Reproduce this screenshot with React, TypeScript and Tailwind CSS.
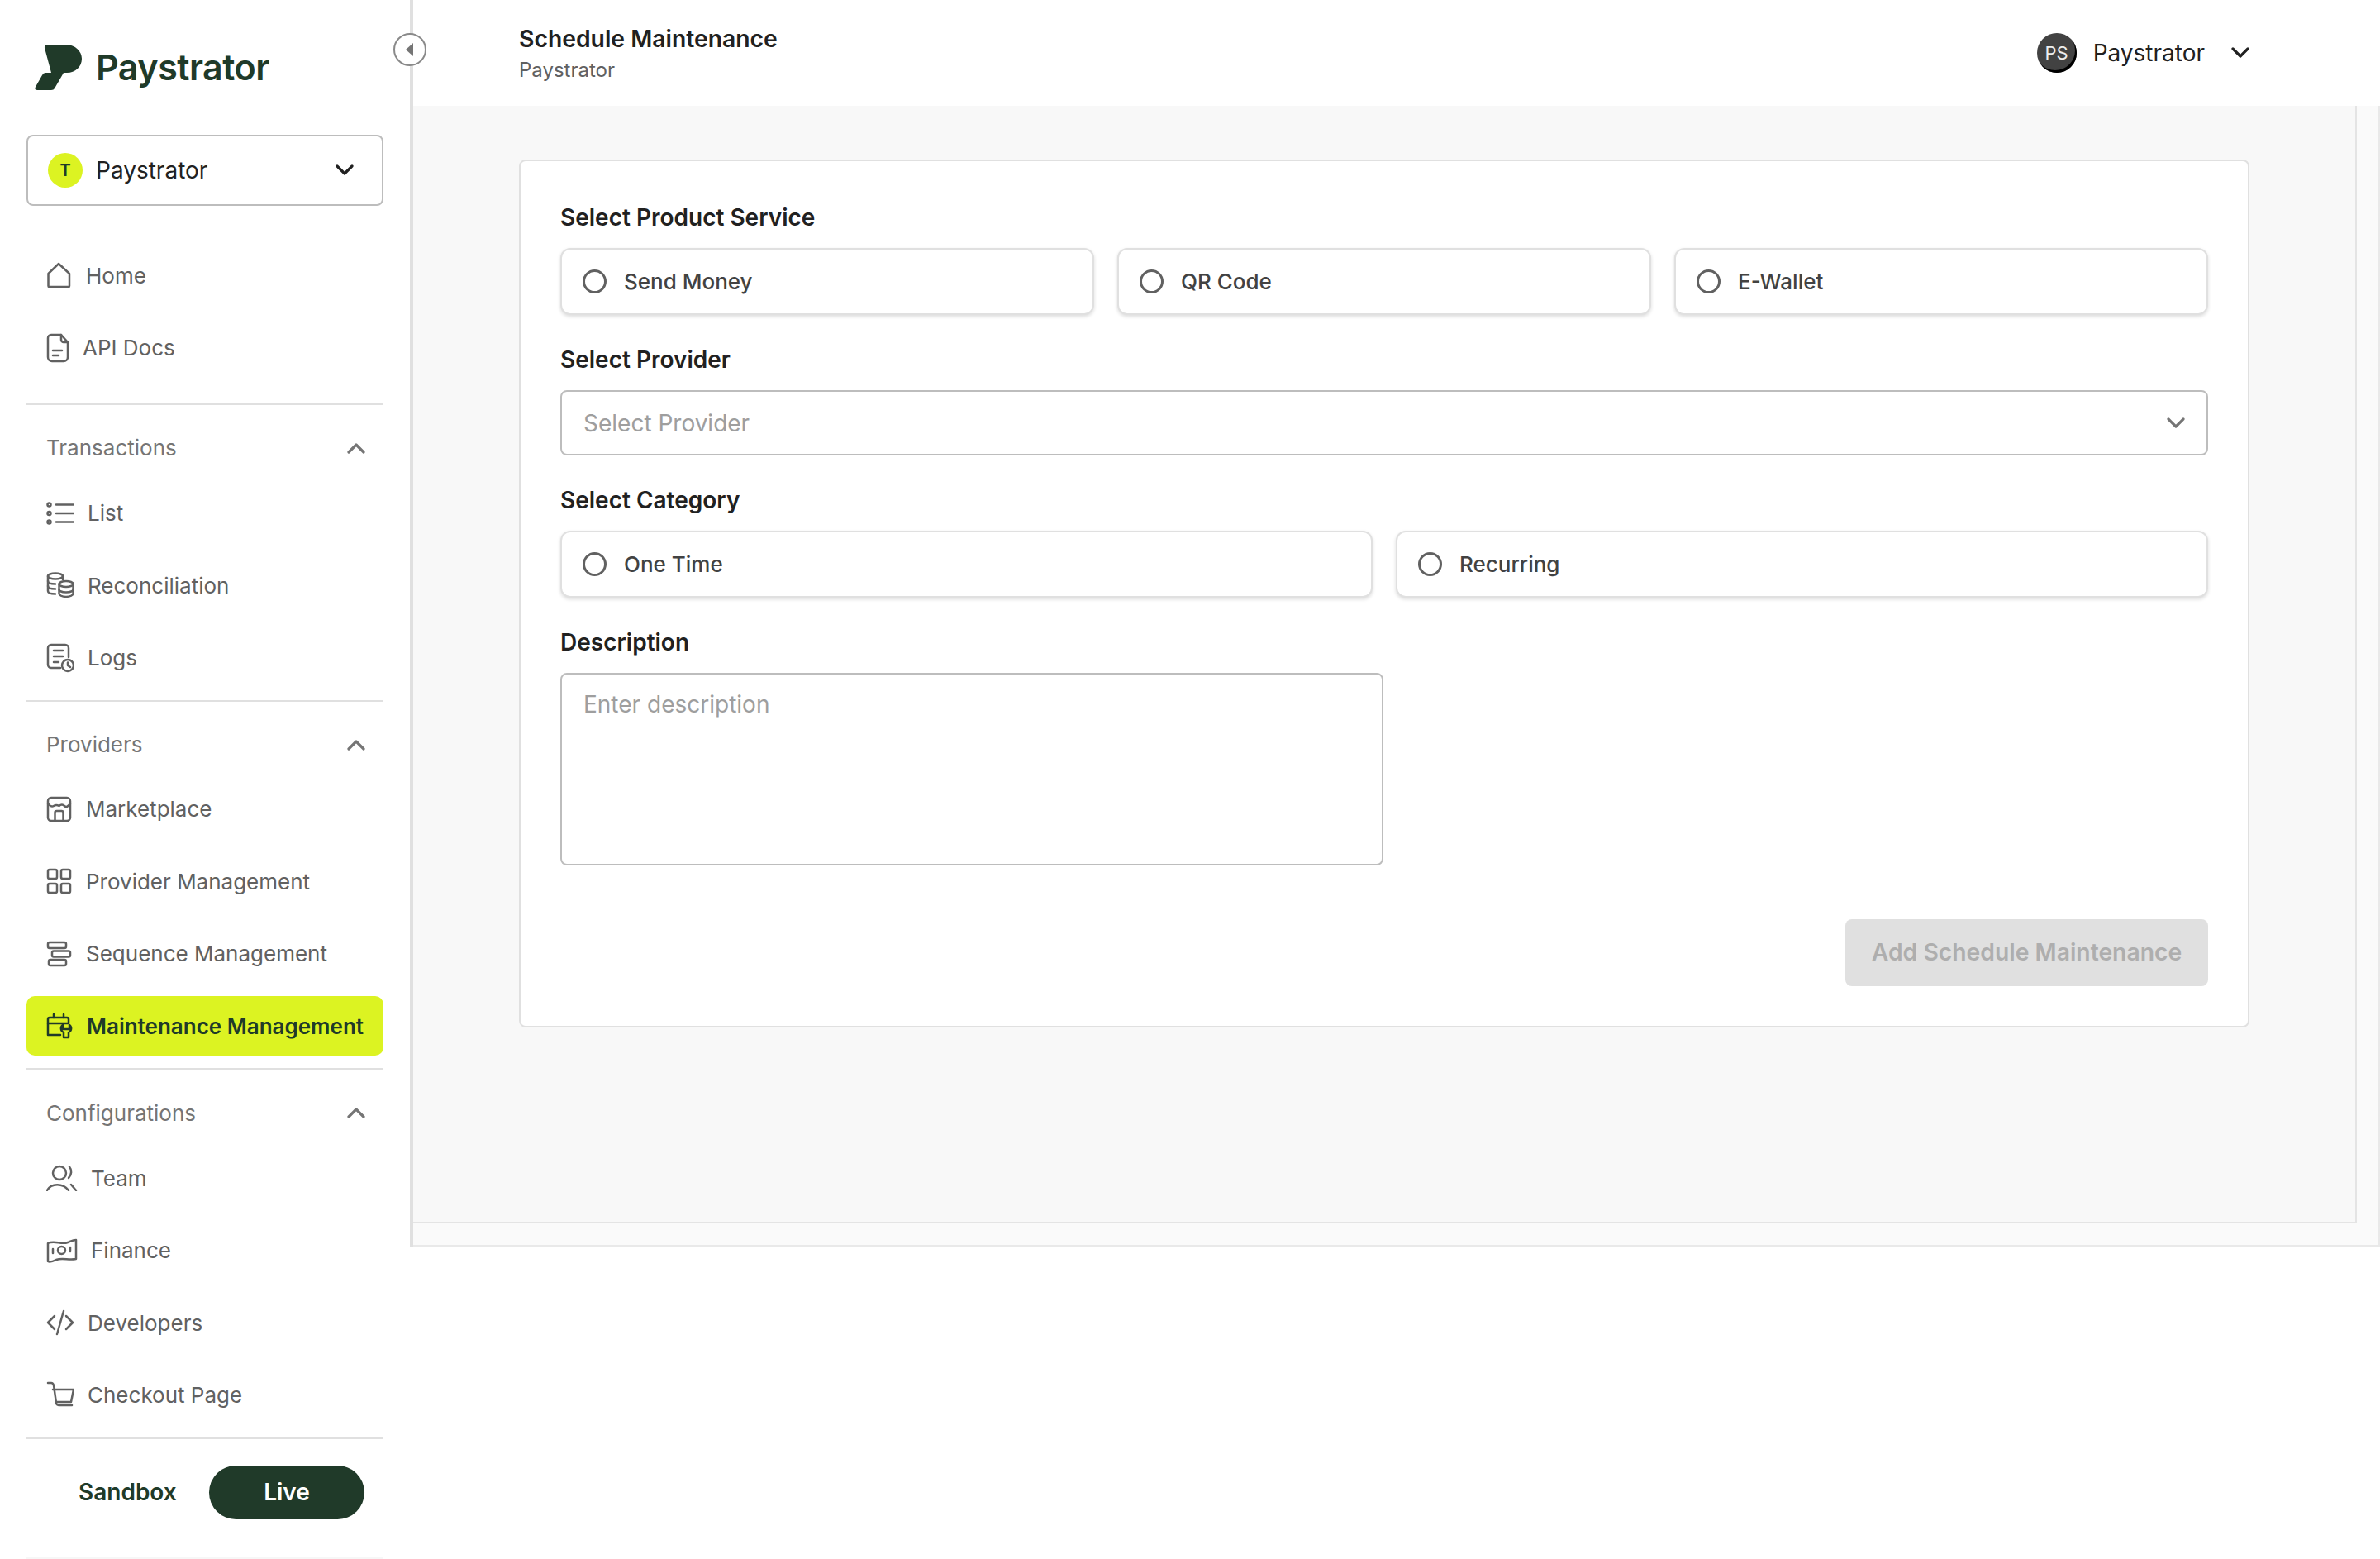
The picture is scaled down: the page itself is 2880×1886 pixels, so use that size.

import React from "react";

const S = { fill: "none", stroke: "currentColor", strokeWidth: 2.5, strokeLinecap: "round" as const, strokeLinejoin: "round" as const };

const Chevron = ({ up, className }: { up?: boolean; className: string }) => (
  <svg viewBox="0 0 22 14" width="22" height="14" className={className} fill="none" stroke="currentColor" strokeWidth="3.2" strokeLinecap="round" strokeLinejoin="round">
    <path d={up ? "M2 12 L11 3 L20 12" : "M2 2 L11 11 L20 2"} />
  </svg>
);

const HomeIcon = () => (
  <svg viewBox="0 0 32 32" width="32" height="32" {...S}><path d="M2.5 14 L15 2 L28 14 V29 a1 1 0 0 1-1 1 H3.5 a1 1 0 0 1-1-1 Z" /></svg>
);
const DocIcon = () => (
  <svg viewBox="0 0 28 36" width="28" height="36" {...S}>
    <path d="M6 2 H18 L26 11 V29 a5 5 0 0 1-5 5 H7 a5 5 0 0 1-5-5 V6 a4 4 0 0 1 4-4 Z" />
    <path d="M18 2 V8 a3 3 0 0 0 3 3 H26" /><path d="M8 21 H19" /><path d="M8 27 H15" />
  </svg>
);
const ListIcon = () => (
  <svg viewBox="0 0 34 28" width="34" height="28" {...S}>
    <circle cx="3.5" cy="3.5" r="2" /><circle cx="3.5" cy="14" r="2" /><circle cx="3.5" cy="24.5" r="2" />
    <path d="M12 3.5 H33" /><path d="M12 14 H33" /><path d="M12 24.5 H33" />
  </svg>
);
const CoinsIcon = () => (
  <svg viewBox="0 0 34 32" width="34" height="32" {...S}>
    <ellipse cx="11" cy="5" rx="9" ry="3.5" />
    <path d="M2 5 V23 c0 2 3 3.5 9 3.5" /><path d="M2 11 c0 2 3 3.5 9 3.5" /><path d="M2 17 c0 2 3 3.5 9 3.5" /><path d="M20 5 V9" />
    <ellipse cx="24" cy="14.5" rx="8.5" ry="3.5" />
    <path d="M15.5 14.5 V26 c0 2 3.5 4 8.5 4 s8.5-2 8.5-4 V14.5" /><path d="M15.5 21 c0 2 3.5 3.5 8.5 3.5 s8.5-1.5 8.5-3.5" />
  </svg>
);
const LogsIcon = () => (
  <svg viewBox="0 0 34 36" width="34" height="36" {...S}>
    <path d="M27 17 V6 a4 4 0 0 0-4-4 H6 a4 4 0 0 0-4 4 V26 a4 4 0 0 0 4 4 H17" />
    <path d="M9 9 H20" /><path d="M9 16 H20" /><path d="M9 23 H15" />
    <circle cx="26" cy="27" r="7" /><path d="M26 23.5 V27 L29 29" />
  </svg>
);
const MarketIcon = () => (
  <svg viewBox="0 0 32 32" width="32" height="32" {...S}>
    <rect x="2" y="2" width="27" height="28" rx="4" />
    <path d="M2 9 Q6 14 9 12 T15.5 12 Q19 9 22 12 T29 9" />
    <path d="M10.5 30 V20 a2 2 0 0 1 2-2 H18.5 a2 2 0 0 1 2 2 V30" />
  </svg>
);
const GridIcon = () => (
  <svg viewBox="0 0 32 32" width="32" height="32" {...S}>
    <rect x="2" y="2" width="11" height="11" rx="2" /><rect x="18" y="2" width="11" height="11" rx="2" />
    <rect x="2" y="19" width="11" height="11" rx="2" /><rect x="18" y="19" width="11" height="11" rx="2" />
  </svg>
);
const SeqIcon = () => (
  <svg viewBox="0 0 32 32" width="32" height="32" {...S}>
    <rect x="2" y="2" width="22" height="7" rx="2" /><rect x="7" y="12.5" width="22" height="7" rx="2" /><rect x="3" y="23" width="21" height="7" rx="2" />
  </svg>
);
const CalIcon = () => (
  <svg viewBox="0 0 33 32" width="33" height="32" {...S}>
    <path d="M17 27 H2 V8 a2 2 0 0 1 2-2 H25 a2 2 0 0 1 2 2 V12" /><path d="M2 13 H27" /><path d="M9 2 V6" /><path d="M21 2 V6" />
    <path d="M20 15 C17 17 17 22 21 24 V30 H27 V24 C31 22 31 17 28 15 V20 H20 Z" />
  </svg>
);
const TeamIcon = () => (
  <svg viewBox="0 0 38 32" width="38" height="32" {...S}>
    <circle cx="16" cy="10" r="8" /><path d="M28 2.5 C31 6 31 12 27 16" />
    <path d="M1 31 C6 22 20 22 27 31" /><path d="M30 24 L36 31" />
  </svg>
);
const MoneyIcon = () => (
  <svg viewBox="0 0 38 32" width="38" height="32" {...S}>
    <path d="M2 7 C10 3 18 9 26 6 C29 5 32 3 36 3 V26 C27 28 20 24 12 27 C8 29 4 30 2 29 Z" />
    <circle cx="18.5" cy="15.5" r="4.5" /><path d="M8 14 V19" /><path d="M29 12 V17" />
  </svg>
);
const CodeIcon = () => (
  <svg viewBox="0 0 34 32" width="34" height="32" {...S}>
    <path d="M10 8 L2 16 L10 24" /><path d="M24 8 L32 16 L24 24" /><path d="M21 2 L13 30" />
  </svg>
);
const CartIcon = () => (
  <svg viewBox="0 0 34 34" width="34" height="34" {...S}>
    <path d="M2 2 H6 C8 2 8.5 3 9 5 L12 26 C12.2 28 13 29 15 29 H31" />
    <path d="M8 10 H33 L30 25 H12" />
  </svg>
);

const Item = ({ icon, label, active }: { icon: React.ReactNode; label: string; active?: boolean }) => (
  <div className={active
    ? "flex h-[72px] items-center gap-4 whitespace-nowrap rounded-[10px] bg-[#dcf322] pl-6 text-[26px] font-semibold text-[#203a29]"
    : "flex h-[72px] items-center gap-4 whitespace-nowrap pl-6 text-[26px] text-[#616161]"}>
    {icon}
    <span>{label}</span>
  </div>
);

const Heading = ({ label }: { label: string }) => (
  <div className="flex h-10 items-center justify-between pl-6 pr-[22px] text-[26px] text-[#757575]">
    <span>{label}</span>
    <Chevron up className="text-[#757575]" />
  </div>
);

const Sidebar = () => (
  <aside className="relative h-[1508px] w-[500px] shrink-0 border-r-4 border-[#e0e0e0] bg-white">
    <div className="absolute -right-[20px] top-10 z-10 flex h-10 w-10 items-center justify-center rounded-full border-2 border-[#8a8a8a] bg-white">
      <svg viewBox="0 0 10 16" width="10" height="16"><path d="M9 0 L0 8 L9 16 Z" fill="#757575" /></svg>
    </div>
    <div className="flex w-[496px] flex-col px-8 pt-[54px]">
      <div className="flex h-[55px] items-center gap-4 pl-2.5">
        <svg viewBox="42 54 58 55" width="58" height="55" fill="#203a29">
          <path d="M57 54 H80 C91 54 99 62 99 71 C99 81 91 88 81 88 H77 L66 107 Q65 109 62 109 H45 Q41 109 43 105 L51 91 Q52.5 88 55 88 H62 L54 58 Q53.5 54 57 54 Z" />
        </svg>
        <span className="text-[43px] font-semibold leading-none tracking-[-0.5px] text-[#203a29]">Paystrator</span>
      </div>
      <div className="mt-[54px] flex h-[86px] items-center justify-between rounded-lg border-2 border-[#bdbdbd] pl-6 pr-[34px]">
        <div className="flex items-center gap-4">
          <div className="flex h-[42px] w-[42px] items-center justify-center rounded-full bg-[#dcf322] text-[20px] font-semibold text-[#203a29]">T</div>
          <span className="text-[28px] text-[#212121]">Paystrator</span>
        </div>
        <Chevron className="text-[#212121]" />
      </div>

      <div className="mt-12 flex flex-col gap-[15.5px]">
        <Item icon={<HomeIcon />} label="Home" />
        <Item icon={<DocIcon />} label="API Docs" />
      </div>
      <div className="mt-[31px] h-0.5 bg-[#e0e0e0]" />

      <div className="mt-8"><Heading label="Transactions" /></div>
      <div className="mt-[23px] flex flex-col gap-[15.5px]">
        <Item icon={<ListIcon />} label="List" />
        <Item icon={<CoinsIcon />} label="Reconciliation" />
        <Item icon={<LogsIcon />} label="Logs" />
      </div>
      <div className="mt-[15px] h-0.5 bg-[#e0e0e0]" />

      <div className="mt-8"><Heading label="Providers" /></div>
      <div className="mt-[22px] flex flex-col gap-[15.5px]">
        <Item icon={<MarketIcon />} label="Marketplace" />
        <Item icon={<GridIcon />} label="Provider Management" />
        <Item icon={<SeqIcon />} label="Sequence Management" />
        <Item icon={<CalIcon />} label="Maintenance Management" active />
      </div>
      <div className="mt-[15px] h-0.5 bg-[#e0e0e0]" />

      <div className="mt-8"><Heading label="Configurations" /></div>
      <div className="mt-[23px] flex flex-col gap-[15.5px]">
        <Item icon={<TeamIcon />} label="Team" />
        <Item icon={<MoneyIcon />} label="Finance" />
        <Item icon={<CodeIcon />} label="Developers" />
        <Item icon={<CartIcon />} label="Checkout Page" />
      </div>
      <div className="mt-[15px] h-0.5 bg-[#e0e0e0]" />

      <div className="mt-8 flex h-[65px] items-center pl-[63px]">
        <span className="w-[158px] text-[28px] font-semibold text-[#203a29]">Sandbox</span>
        <div className="flex h-[65px] w-[188px] items-center justify-center rounded-full bg-[#203a29] text-[28px] font-semibold text-white">Live</div>
      </div>
      <div className="mt-[46px] h-0.5 bg-[#f7f7f7]" />
    </div>
  </aside>
);

const Radio = ({ label }: { label: string }) => (
  <div className="flex h-[81px] items-center gap-[21px] rounded-xl border-2 border-[#e0e0e0] bg-white pl-[25px] shadow-[0_2px_4px_rgba(0,0,0,0.14)]">
    <div className="h-[29px] w-[29px] rounded-full border-[3px] border-[#616161]" />
    <span className="text-[26px] font-medium text-[#424242]">{label}</span>
  </div>
);

const Label = ({ text }: { text: string }) => (
  <div className="flex h-10 items-center text-[28px] font-semibold text-[#212121]">{text}</div>
);

const Main = () => (
  <main className="flex h-[1508px] min-w-0 flex-1 flex-col">
    <header className="flex h-32 shrink-0 items-center justify-between bg-white pl-32 pr-[158px]">
      <div className="flex flex-col">
        <span className="text-[28.3px] font-semibold leading-10 text-[#212121]">Schedule Maintenance</span>
        <span className="mt-[2px] text-[24px] leading-8 text-[#616161]">Paystrator</span>
      </div>
      <div className="flex items-center">
        <div className="flex h-12 w-12 items-center justify-center rounded-full bg-[#424242] text-[22px] text-[#eeeeee] shadow-[inset_-2px_-3px_0_#000]">PS</div>
        <span className="ml-[20px] text-[28px] text-[#212121]">Paystrator</span>
        <Chevron className="ml-8 text-[#212121]" />
      </div>
    </header>
    <div className="flex min-h-0 flex-1 flex-col border-r-2 border-b-2 border-[#e9e9e9] bg-[#fafafa] pr-[26px] pb-[26px]">
      <div className="flex flex-1 flex-col border-r-2 border-b-2 border-[#e4e4e4] bg-[#f8f8f8] px-32 pt-[65px]">
        <div className="rounded-lg border-2 border-[#e0e0e0] bg-white p-12">
          <Label text="Select Product Service" />
          <div className="mt-[17px] grid grid-cols-3 gap-7">
            <Radio label="Send Money" />
            <Radio label="QR Code" />
            <Radio label="E-Wallet" />
          </div>

          <div className="mt-[34px]"><Label text="Select Provider" /></div>
          <div className="mt-[17px] flex h-[79px] items-center justify-between rounded-lg border-2 border-[#bdbdbd] bg-white pl-[26px] pr-[26px] text-[28px] text-[#9e9e9e]">
            <span>Select Provider</span>
            <Chevron className="text-[#757575]" />
          </div>

          <div className="mt-[34px]"><Label text="Select Category" /></div>
          <div className="mt-[17px] grid grid-cols-2 gap-7">
            <Radio label="One Time" />
            <Radio label="Recurring" />
          </div>

          <div className="mt-[34px]"><Label text="Description" /></div>
          <div className="mt-[17px] h-[233px] w-[996px] rounded-lg border-2 border-[#bdbdbd] bg-white pl-[26px] pt-[15px] text-[28px] text-[#9e9e9e]">Enter description</div>

          <div className="mt-[65px] flex justify-end">
            <div className="flex h-[81px] w-[439px] items-center justify-center rounded-lg bg-[#e0e0e0] text-[28.3px] font-semibold text-[#aeaeae]">Add Schedule Maintenance</div>
          </div>
        </div>
      </div>
    </div>
  </main>
);

export default function App() {
  return (
    <div className="flex h-[1886px] w-[2880px] items-start overflow-hidden bg-white font-['Inter',sans-serif]">
      <Sidebar />
      <Main />
    </div>
  );
}
